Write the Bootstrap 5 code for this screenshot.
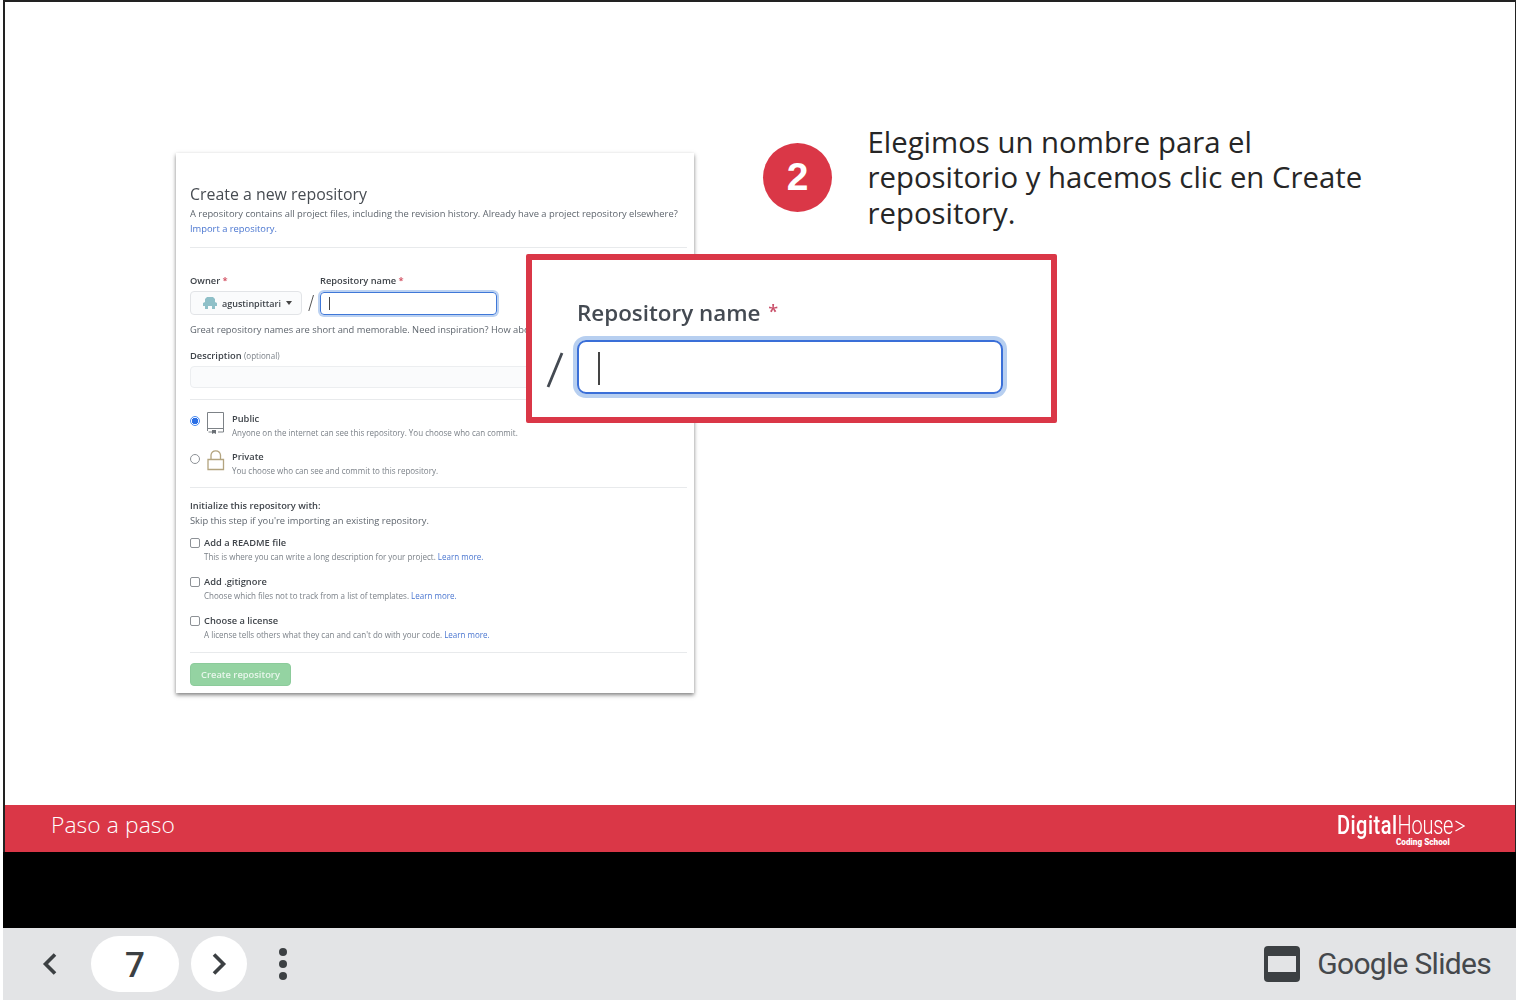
<!DOCTYPE html>
<html lang="es">
<head>
    <meta charset="UTF-8">
    <title>Paso a paso - Google Slides</title>
    <link href="https://cdn.jsdelivr.net/npm/bootstrap@5.3.0/dist/css/bootstrap.min.css" rel="stylesheet">
    <style>
        html, body { background: #fff; overflow: hidden; }
        .viewer { width: 1513px; height: 1000px; margin-left: 3px; font-family: "Open Sans", sans-serif; }
        .stage { height: 852px; position: relative; background: #fff; border: solid #222; border-width: 2px 1px 0 2px; }
        .slide-canvas { height: 803px; position: relative; }
        .slide-foot { height: 47px; background: #da3747; color: #fff; padding: 0 50px 0 46px; }
        .foot-title { font-weight: 300; font-size: 22.8px; letter-spacing: .1px; line-height: 1; margin-top: -6px; }
        .dh-logo { width: 128px; margin-top: 3px; }
        .dh-word { font-family: Roboto, sans-serif; font-size: 25px; line-height: 24px; white-space: nowrap; display: inline-block; transform: scaleX(.8); transform-origin: left; width: 118px; }
        .dh-word b { font-weight: 500; letter-spacing: .6px; }
        .dh-word i { font-style: normal; font-weight: 300; letter-spacing: -.3px; }
        .dh-sub { font-family: Roboto, sans-serif; font-weight: 900; font-size: 8.2px; line-height: 9px; margin-left: 59px; white-space: nowrap; }
        .letterbox { height: 76px; background: #000; }
        .control-bar { height: 72px; background: #e3e4e6; color: #3c4043; padding: 0 25px 0 39px; }
        .pill-num { width: 88px; height: 56px; border-radius: 28px; background: #fff; font-family: Roboto, sans-serif; font-weight: 500; font-size: 35px; margin-left: 33px; padding-top: 4px; }
        .round-next { width: 56px; height: 56px; border-radius: 50%; background: #fff; margin-left: 12px; }
        .kebab { margin-left: 32px; gap: 4px; }
        .kebab span { width: 8px; height: 8px; border-radius: 50%; background: #3c4043; }
        .brand-icon { margin-left: 1px; }
        .brand-name { font-family: Roboto, sans-serif; font-size: 30px; letter-spacing: -.7px; color: #45484c; margin: -2px 0 0 17px; }

        /* github screenshot on the slide */
        .shot { position: absolute; left: 171px; top: 151px; width: 518px; height: 540px; background: #fff; padding: 31px 7px 0 14px; box-shadow: 0 2px 4px rgba(0,0,0,.5); color: #5f666e; font-family: "Open Sans", sans-serif; font-size: 9.36px; line-height: 15px; }
        .shot-inner { filter: blur(.5px); }
        .shot h1 { font-size: 15.9px; font-weight: 400; line-height: 20px; margin: 0 0 2px; color: #474c52; }
        .shot a { color: #4a76d0; text-decoration: none; }
        .shot-rule { height: 1px; background: #e8eaec; }
        .rule-head { margin-top: 11px; }
        .rule-desc { margin-top: 11px; }
        .rule-choice { margin-top: 7px; }
        .lbl { color: #3f444a; font-weight: 600; font-size: 9.3px; }
        .star { color: #d0485a; }
        .owner-col { width: 130px; }
        .labels-row { margin-top: 25px; }
        .inputs-row { margin-top: 3px; }
        .fake-select { width: 112px; height: 24px; border: 1px solid #e2e4e7; border-radius: 4px; background: #fafbfc; color: #3f444a; font-weight: 600; padding-left: 12px; gap: 5px; font-size: 9px; }
        .repo-slash { margin: 0 6px; }
        .name-input { width: 177px; height: 23px; border: 1px solid #3f78d8; border-radius: 4px; box-shadow: 0 0 0 2px #bcd2f2; padding-left: 8px; }
        .name-input span { width: 1px; height: 13px; background: #444; }
        .help-line { margin-top: 7px; white-space: nowrap; overflow: hidden; }
        .desc-label { margin-top: 11px; }
        .desc-input { height: 22px; margin-top: 3px; border: 1px solid #eceef0; border-radius: 4px; background: #fafbfc; }
        .choice-public { height: 38px; margin-top: 11px; }
        .choice-private { height: 31px; }
        .radio-dot { width: 10px; height: 10px; margin: 5px 7px 0 0; border-radius: 50%; border: 1px solid #8d9196; flex: none; }
        .radio-dot.on { border-color: #4a8af0; background: radial-gradient(circle, #2b6fe6 0 3px, #fff 3.5px); }
        .choice-icon { margin-right: 7px; }
        .tick-box { width: 10px; height: 10px; border-radius: 2px; border: 1px solid #8d9196; flex: none; margin: 3px 4px 0 0; }
        .opt-note { color: #7b8188; font-size: 8.03px; line-height: 14px; }
        .opt-inline { color: #7b8188; font-size: 8.03px; }
        .init-head { margin-top: 11px; line-height: 14px; }
        .init-opt { height: 39px; padding-top: 2px; }
        .init-first { margin-top: 5px; }
        .init-last { height: 41px; }
        .go-btn { width: 101px; height: 23px; margin-top: 10px; background: #94d3a2; border: 1px solid #8ccb9b; border-radius: 4px; color: #e8f6eb; font-weight: 600; }

        /* zoomed callout */
        .callout { position: absolute; left: 521px; top: 252px; width: 531px; height: 169px; border: 6px solid #da3747; border-radius: 2px; background: #fff; }
        .callout-label { position: absolute; left: 45px; top: 38px; font-size: 22.4px; font-weight: 600; line-height: 30px; color: #444a52; white-space: nowrap; filter: blur(.3px); }
        .callout-label span { color: #c9506a; margin-left: 2px; position: relative; top: -3px; font-size: 18px; }
        .callout-slash { position: absolute; left: 14px; top: 92px; }
        .callout-input { position: absolute; left: 45px; top: 80px; width: 426px; height: 54px; border: 2px solid #3a6fd8; border-radius: 9px; box-shadow: 0 0 0 4px #b7cff0; }
        .callout-input span { position: absolute; left: 19px; top: 10px; width: 2px; height: 33px; background: #444; }

        .step-dot { position: absolute; left: 758px; top: 141px; width: 69px; height: 69px; border-radius: 50%; background: #da3747; color: #fff; font-family: "Liberation Sans", sans-serif; font-weight: 700; font-size: 39px; }
        .step-text { position: absolute; left: 862.5px; top: 123px; width: 520px; margin: 0; font-size: 29.35px; line-height: 35.3px; color: #262626; }
    </style>
</head>
<body>
<div class="viewer">
    <div class="stage d-flex flex-column">
        <div class="slide-canvas">
            <div class="shot">
                <div class="shot-inner">
                    <h1>Create a new repository</h1>
                    <div>A repository contains all project files, including the revision history. Already have a project repository elsewhere?</div>
                    <div><a href="#">Import a repository.</a></div>
                    <div class="shot-rule rule-head"></div>

                    <div class="d-flex labels-row">
                        <div class="lbl owner-col">Owner <span class="star">*</span></div>
                        <div class="lbl">Repository name <span class="star">*</span></div>
                    </div>
                    <div class="d-flex align-items-center inputs-row">
                        <div class="fake-select d-flex align-items-center">
                            <svg width="14" height="14" viewBox="0 0 14 14"><path fill="#8fc0c8" d="M4 1h6l2 2v3l2 1v3h-2v3H9v-3H5v3H2v-3H0V7l2-1V3z"/></svg>
                            <span>agustinpittari</span>
                            <svg width="6" height="4" viewBox="0 0 6 4"><path fill="#444" d="M0 0h6L3 4z"/></svg>
                        </div>
                        <svg class="repo-slash" width="6" height="16" viewBox="0 0 6 16"><path d="M5.500 0 .8 16" stroke="#555" fill="none"/></svg>
                        <div class="name-input d-flex align-items-center"><span></span></div>
                    </div>
                    <div class="help-line">Great repository names are short and memorable. Need inspiration? How about</div>
                    <div class="desc-label"><span class="lbl">Description</span> <span class="opt-inline">(optional)</span></div>
                    <div class="desc-input"></div>
                    <div class="shot-rule rule-desc"></div>

                    <div class="d-flex align-items-start choice-public">
                        <span class="radio-dot on"></span>
                        <svg class="choice-icon" width="18" height="24" viewBox="0 0 18 24"><path fill="none" stroke="#7d8287" d="M.5 20V1.500h16V21H11M.5 17.500h16M5 21H1.500"/><path fill="#6a6f75" d="M5 19h4v4L7 22l-2 1z"/></svg>
                        <div>
                            <div class="lbl">Public</div>
                            <div class="opt-note">Anyone on the internet can see this repository. You choose who can commit.</div>
                        </div>
                    </div>
                    <div class="d-flex align-items-start choice-private">
                        <span class="radio-dot"></span>
                        <svg class="choice-icon" width="18" height="22" viewBox="0 0 18 22"><path fill="none" stroke="#b3a47f" stroke-width="1.300" d="M1 10.500h15.500V20.500H1zM4 10V6a4.800 4.800 0 0 1 9.500 0v4"/></svg>
                        <div>
                            <div class="lbl">Private</div>
                            <div class="opt-note">You choose who can see and commit to this repository.</div>
                        </div>
                    </div>
                    <div class="shot-rule rule-choice"></div>

                    <div class="lbl init-head">Initialize this repository with:</div>
                    <div>Skip this step if you're importing an existing repository.</div>
                    <div class="d-flex init-opt init-first">
                        <span class="tick-box"></span>
                        <div>
                            <div class="lbl">Add a README file</div>
                            <div class="opt-note">This is where you can write a long description for your project. <a href="#">Learn more.</a></div>
                        </div>
                    </div>
                    <div class="d-flex init-opt">
                        <span class="tick-box"></span>
                        <div>
                            <div class="lbl">Add .gitignore</div>
                            <div class="opt-note">Choose which files not to track from a list of templates. <a href="#">Learn more.</a></div>
                        </div>
                    </div>
                    <div class="d-flex init-opt init-last">
                        <span class="tick-box"></span>
                        <div>
                            <div class="lbl">Choose a license</div>
                            <div class="opt-note">A license tells others what they can and can't do with your code. <a href="#">Learn more.</a></div>
                        </div>
                    </div>
                    <div class="shot-rule"></div>
                    <div class="go-btn d-flex align-items-center justify-content-center">Create repository</div>
                </div>
            </div>

            <div class="callout">
                <div class="callout-label">Repository name <span>*</span></div>
                <svg class="callout-slash" width="18" height="36" viewBox="0 0 18 36"><path d="M16 1 2 35" stroke="#444a52" stroke-width="2.800" fill="none"/></svg>
                <div class="callout-input"><span></span></div>
            </div>

            <div class="step-dot d-flex align-items-center justify-content-center">2</div>
            <p class="step-text">Elegimos un nombre para el<br>repositorio y hacemos clic en Create<br>repository.</p>
        </div>
        <div class="slide-foot d-flex align-items-center justify-content-between">
            <div class="foot-title">Paso a paso</div>
            <div class="dh-logo">
                <div class="d-flex align-items-center">
                    <span class="dh-word"><b>Digital</b><i>House</i></span>
                    <svg width="11" height="14" viewBox="0 0 11 14"><path d="M.5 1.500 10 7 .5 12.500" stroke="#fff" stroke-width="1.300" fill="none"/></svg>
                </div>
                <div class="dh-sub">Coding School</div>
            </div>
        </div>
    </div>
    <div class="letterbox"></div>
    <div class="control-bar d-flex align-items-center">
        <svg width="16" height="24" viewBox="0 0 16 24"><path d="M13 2.500 3.500 12l9.500 9.500" stroke="#3c4043" stroke-width="3.600" fill="none"/></svg>
        <div class="pill-num d-flex align-items-center justify-content-center">7</div>
        <div class="round-next d-flex align-items-center justify-content-center">
            <svg width="16" height="24" viewBox="0 0 16 24"><path d="M3 2.500 12.500 12 3 21.500" stroke="#3c4043" stroke-width="3.600" fill="none"/></svg>
        </div>
        <div class="kebab d-flex flex-column"><span></span><span></span><span></span></div>
        <div class="ms-auto d-flex align-items-center">
            <svg class="brand-icon" width="36" height="36" viewBox="0 0 36 36"><rect width="36" height="36" rx="4" fill="#3c4043"/><rect x="4" y="10" width="28" height="16" fill="#e3e4e6"/></svg>
            <span class="brand-name">Google Slides</span>
        </div>
    </div>
</div>
<script src="https://cdn.jsdelivr.net/npm/bootstrap@5.3.0/dist/js/bootstrap.bundle.min.js"></script>
</body>
</html>
